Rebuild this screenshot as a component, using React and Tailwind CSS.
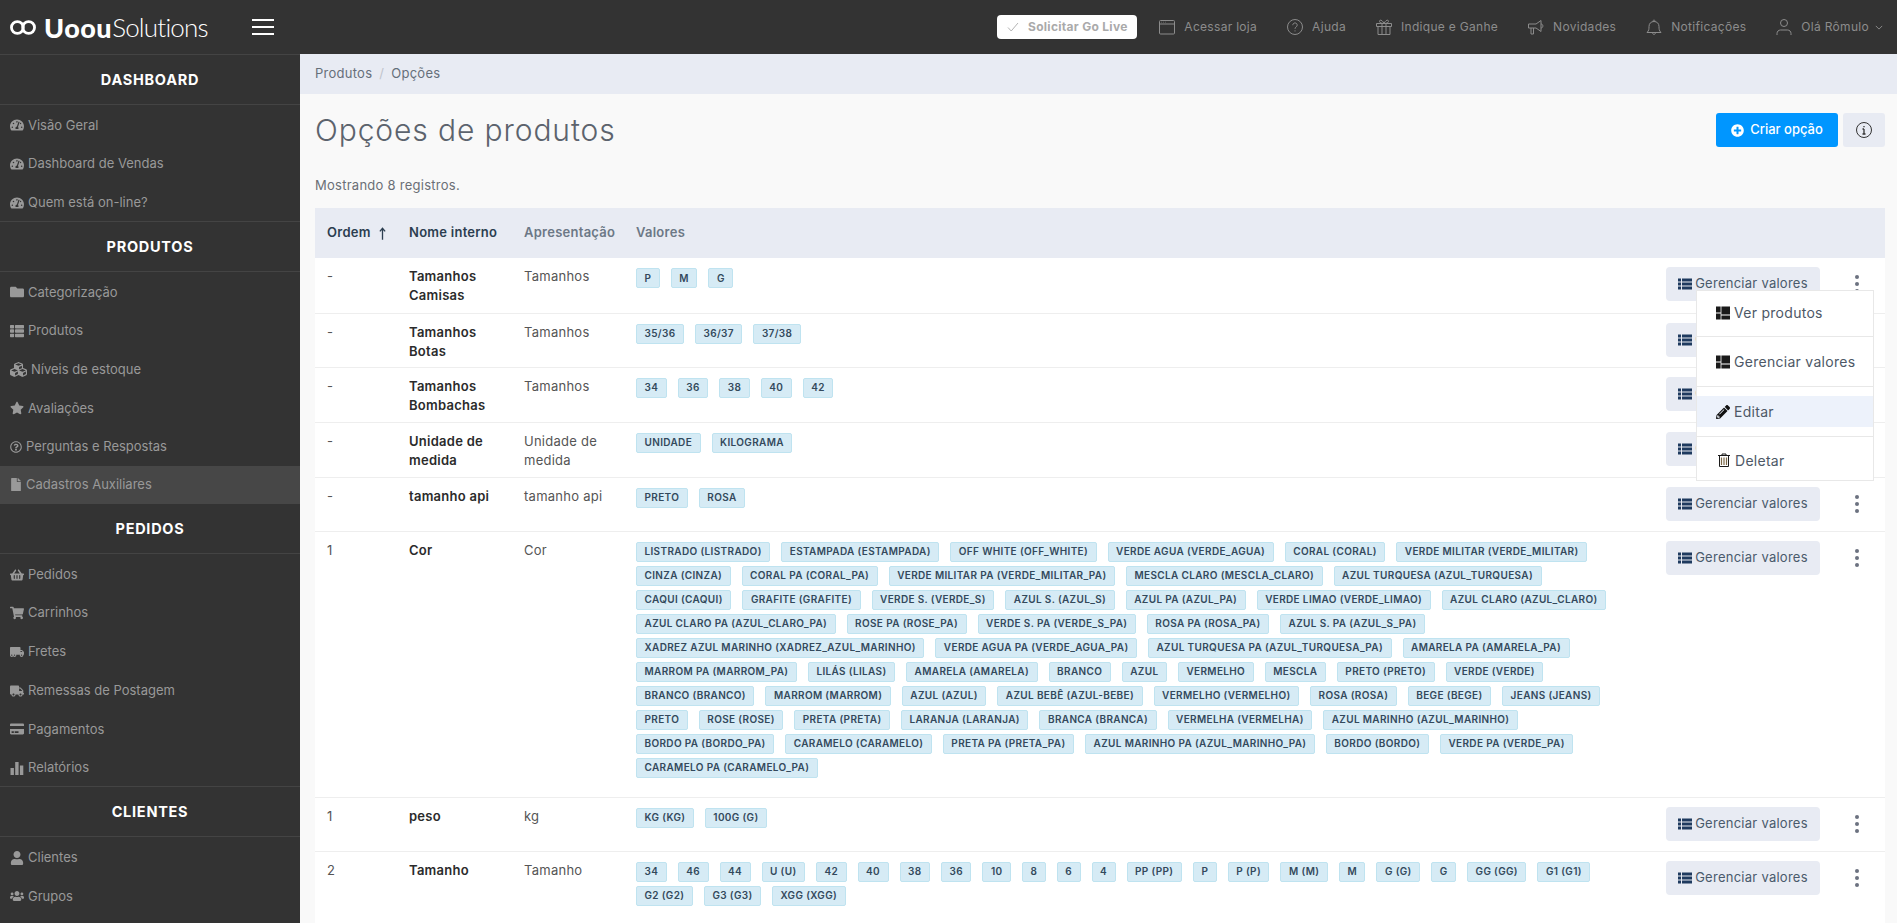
import {
  FaTachometerAlt,
  FaFolder,
  FaThList,
  FaCubes,
  FaStar,
  FaRegQuestionCircle,
  FaFile,
  FaShoppingBasket,
  FaShoppingCart,
  FaTruckMoving,
  FaTruck,
  FaCreditCard,
  FaUser,
  FaUsers,
  FaPlusCircle,
  FaPencilAlt,
} from "react-icons/fa";

const sidebar = [
  {
    title: "DASHBOARD",
    items: [
      { label: "Visão Geral", icon: FaTachometerAlt },
      { label: "Dashboard de Vendas", icon: FaTachometerAlt },
      { label: "Quem está on-line?", icon: FaTachometerAlt },
    ],
  },
  {
    title: "PRODUTOS",
    items: [
      { label: "Categorização", icon: FaFolder },
      { label: "Produtos", icon: FaThList },
      { label: "Níveis de estoque", icon: FaCubes, iconSize: "h-[17px] w-[17px]" },
      { label: "Avaliações", icon: FaStar },
      { label: "Perguntas e Respostas", icon: FaRegQuestionCircle, iconSize: "h-[12px] w-[12px]" },
      { label: "Cadastros Auxiliares", icon: FaFile, active: true, iconSize: "h-[13px] w-[12px]" },
    ],
  },
  {
    title: "PEDIDOS",
    noTopBorder: true,
    items: [
      { label: "Pedidos", icon: FaShoppingBasket },
      { label: "Carrinhos", icon: FaShoppingCart },
      { label: "Fretes", icon: FaTruckMoving },
      { label: "Remessas de Postagem", icon: FaTruck },
      { label: "Pagamentos", icon: FaCreditCard },
      { label: "Relatórios", icon: StatsIcon },
    ],
  },
  {
    title: "CLIENTES",
    items: [
      { label: "Clientes", icon: FaUser },
      { label: "Grupos", icon: FaUsers },
    ],
  },
];

const rows = [
  {
    ordem: "-",
    nome: "Tamanhos Camisas",
    apresentacao: "Tamanhos",
    height: "h-[55px]",
    lines: [["P", "M", "G"]],
  },
  {
    ordem: "-",
    nome: "Tamanhos Botas",
    apresentacao: "Tamanhos",
    height: "h-[54px]",
    lines: [["35/36", "36/37", "37/38"]],
  },
  {
    ordem: "-",
    nome: "Tamanhos Bombachas",
    apresentacao: "Tamanhos",
    height: "h-[55px]",
    lines: [["34", "36", "38", "40", "42"]],
  },
  {
    ordem: "-",
    nome: "Unidade de medida",
    apresentacao: "Unidade de medida",
    height: "h-[55px]",
    lines: [["UNIDADE", "KILOGRAMA"]],
  },
  {
    ordem: "-",
    nome: "tamanho api",
    apresentacao: "tamanho api",
    height: "h-[54px]",
    lines: [["PRETO", "ROSA"]],
  },
  {
    ordem: "1",
    nome: "Cor",
    apresentacao: "Cor",
    height: "h-[266px]",
    lines: [
      ["LISTRADO (LISTRADO)", "ESTAMPADA (ESTAMPADA)", "OFF WHITE (OFF_WHITE)", "VERDE AGUA (VERDE_AGUA)", "CORAL (CORAL)", "VERDE MILITAR (VERDE_MILITAR)"],
      ["CINZA (CINZA)", "CORAL PA (CORAL_PA)", "VERDE MILITAR PA (VERDE_MILITAR_PA)", "MESCLA CLARO (MESCLA_CLARO)", "AZUL TURQUESA (AZUL_TURQUESA)"],
      ["CAQUI (CAQUI)", "GRAFITE (GRAFITE)", "VERDE S. (VERDE_S)", "AZUL S. (AZUL_S)", "AZUL PA (AZUL_PA)", "VERDE LIMAO (VERDE_LIMAO)", "AZUL CLARO (AZUL_CLARO)"],
      ["AZUL CLARO PA (AZUL_CLARO_PA)", "ROSE PA (ROSE_PA)", "VERDE S. PA (VERDE_S_PA)", "ROSA PA (ROSA_PA)", "AZUL S. PA (AZUL_S_PA)"],
      ["XADREZ AZUL MARINHO (XADREZ_AZUL_MARINHO)", "VERDE AGUA PA (VERDE_AGUA_PA)", "AZUL TURQUESA PA (AZUL_TURQUESA_PA)", "AMARELA PA (AMARELA_PA)"],
      ["MARROM PA (MARROM_PA)", "LILÁS (LILAS)", "AMARELA (AMARELA)", "BRANCO", "AZUL", "VERMELHO", "MESCLA", "PRETO (PRETO)", "VERDE (VERDE)"],
      ["BRANCO (BRANCO)", "MARROM (MARROM)", "AZUL (AZUL)", "AZUL BEBÊ (AZUL-BEBE)", "VERMELHO (VERMELHO)", "ROSA (ROSA)", "BEGE (BEGE)", "JEANS (JEANS)"],
      ["PRETO", "ROSE (ROSE)", "PRETA (PRETA)", "LARANJA (LARANJA)", "BRANCA (BRANCA)", "VERMELHA (VERMELHA)", "AZUL MARINHO (AZUL_MARINHO)"],
      ["BORDO PA (BORDO_PA)", "CARAMELO (CARAMELO)", "PRETA PA (PRETA_PA)", "AZUL MARINHO PA (AZUL_MARINHO_PA)", "BORDO (BORDO)", "VERDE PA (VERDE_PA)"],
      ["CARAMELO PA (CARAMELO_PA)"],
    ],
  },
  {
    ordem: "1",
    nome: "peso",
    apresentacao: "kg",
    height: "h-[54px]",
    lines: [["KG (KG)", "100G (G)"]],
  },
  {
    ordem: "2",
    nome: "Tamanho",
    apresentacao: "Tamanho",
    height: "h-[80px]",
    lines: [
      ["34", "46", "44", "U (U)", "42", "40", "38", "36", "10", "8", "6", "4", "PP (PP)", "P", "P (P)", "M (M)", "M", "G (G)", "G", "GG (GG)", "G1 (G1)"],
      ["G2 (G2)", "G3 (G3)", "XGG (XGG)"],
    ],
  },
];

function StatsIcon({ className }) {
  return (
    <svg viewBox="0 0 14 14" className={className} fill="currentColor">
      <rect x="0.5" y="7" width="3.4" height="7" />
      <rect x="5.2" y="1" width="3.4" height="13" />
      <rect x="9.9" y="4.5" width="3.4" height="9.5" />
    </svg>
  );
}

function ListIcon() {
  return (
    <svg viewBox="0 0 14 12" className="h-[12px] w-[14px] shrink-0" fill="#1e3a5f">
      <rect x="0" y="0.5" width="3" height="3" />
      <rect x="4" y="0.5" width="10" height="3" />
      <rect x="0" y="4.5" width="3" height="3" />
      <rect x="4" y="4.5" width="10" height="3" />
      <rect x="0" y="8.5" width="3" height="3" />
      <rect x="4" y="8.5" width="10" height="3" />
    </svg>
  );
}

function TopIcon({ children }) {
  return (
    <svg viewBox="0 0 16 16" className="h-4 w-4 shrink-0" fill="none" stroke="#8c8c8c" strokeWidth="1">
      {children}
    </svg>
  );
}

function SplitIcon() {
  return (
    <svg viewBox="0 0 14 14" className="h-[14px] w-[14px] shrink-0" fill="#1a1a1a">
      <rect x="0" y="0.5" width="4.6" height="6" />
      <rect x="0" y="7.5" width="4.6" height="6" />
      <rect x="5.4" y="0.5" width="8.6" height="8" />
      <rect x="5.4" y="9.5" width="8.6" height="4" />
    </svg>
  );
}

function TrashIcon() {
  return (
    <svg viewBox="0 0 14 14" className="h-[14px] w-[14px] shrink-0" fill="none" stroke="#1a1a1a" strokeWidth="1">
      <path d="M1 2.5h12M5 2.5V1h4v1.5M2.5 2.5v11h9v-11" />
      <path d="M4.5 4.5v7.5M7 4.5v7.5M9.5 4.5v7.5" strokeWidth="1.2" stroke="#7d6a4a" />
    </svg>
  );
}

function Sidebar() {
  return (
    <aside className="w-[300px] shrink-0 bg-[#333333] text-[13px] text-[#999999]">
      {sidebar.map((section) => (
        <div key={section.title}>
          <div
            className={`flex items-center justify-center border-b border-[#444444] text-[14.5px] font-bold tracking-[0.05em] text-white ${
              section.noTopBorder ? "h-[50px]" : "h-[51px] border-t"
            }`}
          >
            {section.title}
          </div>
          {section.items.map((item) => (
            <a
              key={item.label}
              className={`flex h-[38.7px] items-center gap-[4px] pl-[10px] ${item.active ? "bg-[#474747]" : "pt-[2px]"}`}
            >
              <item.icon className={`shrink-0 ${item.iconSize || "h-[14px] w-[14px]"}`} />
              <span>{item.label}</span>
            </a>
          ))}
        </div>
      ))}
    </aside>
  );
}

function Topbar() {
  return (
    <header className="flex h-[54px] shrink-0 items-center bg-[#333333] pr-[14px] text-[12px] tracking-[0.025em] text-[#8c8c8c]">
      <div className="flex w-[252px] items-center pl-[8px] tracking-normal text-white">
        <svg viewBox="0 0 32 16" className="mr-[6px] h-[15px] w-[30px]" fill="none" stroke="white" strokeWidth="3">
          <circle cx="10" cy="8" r="6.3" />
          <circle cx="22" cy="8" r="6.3" />
        </svg>
        <span className="font-['Lato',sans-serif] text-[27px] leading-none font-black tracking-[0.5px]">Uoou</span>
        <span className="font-['Lato',sans-serif] text-[26px] leading-none font-light tracking-[-0.8px]">Solutions</span>
      </div>
      <div className="flex w-[22px] flex-col gap-[5px]">
        <span className="h-[2px] bg-white" />
        <span className="h-[2px] bg-white" />
        <span className="h-[2px] bg-white" />
      </div>

      <div className="ml-auto flex items-center gap-[30px]">
        <button className="mr-[-8px] flex h-[24px] w-[140px] items-center justify-center gap-[9px] rounded bg-white font-bold text-[#aaaaaa]">
          <svg viewBox="0 0 12 12" className="h-3 w-3" fill="none" stroke="#aaaaaa" strokeWidth="0.9">
            <path d="M1 6.5l3.2 3.5L11 2" />
          </svg>
          Solicitar Go Live
        </button>
        <a className="flex items-center gap-[9px]">
          <TopIcon>
            <rect x="0.5" y="1.5" width="15" height="13.5" rx="1" />
            <path d="M0.5 5h15M2.5 3.2h.5M4.5 3.2h.5M6.5 3.2h.5" />
          </TopIcon>
          Acessar loja
        </a>
        <a className="flex items-center gap-[9px]">
          <TopIcon>
            <circle cx="8" cy="8" r="7.5" />
            <path d="M5.8 6.2c0-3 4.4-3 4.4 0 0 1.7-2.2 1.7-2.2 3.6M8 11.4v1" />
          </TopIcon>
          Ajuda
        </a>
        <a className="flex items-center gap-[9px]">
          <TopIcon>
            <path d="M0.5 4.5h15v3h-15zM2 7.5v8h12v-8M6 4.5v11M10 4.5v11" />
            <path d="M8 4.5C6.5 1 3.5 0 3.5 2.5 3.5 4 6 4.5 8 4.5 10 4.5 12.5 4 12.5 2.5 12.5 0 9.5 1 8 4.5z" />
          </TopIcon>
          Indique e Ganhe
        </a>
        <a className="flex items-center gap-[9px]">
          <TopIcon>
            <path d="M0.5 5h7.5l5-3.5v11L8 9H0.5zM3 9v6h2.5V9M13 5c2.5 0 2.5 4 0 4" />
          </TopIcon>
          Novidades
        </a>
        <a className="flex items-center gap-[9px]">
          <TopIcon>
            <path d="M1 13.5c2-2 2-3.5 2-6 0-3 2-5 5-5s5 2 5 5c0 2.5 0 4 2 6zM6.5 13.5c0 2.5 3 2.5 3 0M7 2.5c0-2 2-2 2 0" />
          </TopIcon>
          Notificações
        </a>
        <a className="flex items-center gap-[9px]">
          <TopIcon>
            <circle cx="8" cy="4" r="3.5" />
            <path d="M1 16v-1.5c0-2 1.5-3.5 3.5-3.5h7c2 0 3.5 1.5 3.5 3.5V16" />
          </TopIcon>
          <span>Olá Rômulo</span>
          <svg viewBox="0 0 10 6" className="ml-[-3px] h-[5px] w-[8px]" fill="none" stroke="#8c8c8c" strokeWidth="1.2">
            <path d="M1 1l4 4 4-4" />
          </svg>
        </a>
      </div>
    </header>
  );
}

function Tag({ children }) {
  return (
    <span className="flex h-[20px] items-center whitespace-nowrap rounded-[2px] border border-[#bfe3f0] bg-[#d6ebf5] px-[7.5px] text-[10px] font-semibold tracking-[0.035em] text-[#33495c]">
      {children}
    </span>
  );
}

function ActionMenu() {
  return (
    <div className="absolute top-[82px] right-[11px] w-[178px] border border-[#e8e8e8] bg-white text-[14px] tracking-[0.02em] text-[#4d5866]">
      <div className="flex h-[46px] items-center gap-[4px] border-b border-[#e8e8e8] pb-[2px] pl-[19px]">
        <SplitIcon />
        Ver produtos
      </div>
      <div className="flex h-[50px] items-center gap-[4px] border-b border-[#e8e8e8] pl-[19px]">
        <SplitIcon />
        Gerenciar valores
      </div>
      <div className="h-[50px] border-b border-[#e8e8e8] pt-[9px]">
        <div className="flex h-[31px] items-center gap-[4px] bg-[#edf2fb] pl-[19px]">
          <FaPencilAlt className="h-[14px] w-[14px] text-[#111111]" />
          Editar
        </div>
      </div>
      <div className="flex h-[43px] items-center gap-[4px] pt-[3px] pl-[20px]">
        <TrashIcon />
        Deletar
      </div>
    </div>
  );
}

function OptionsTable() {
  return (
    <div className="relative mt-[13px]">
      <table className="w-full table-fixed border-collapse text-[13px] tracking-[0.02em]">
        <thead>
          <tr className="h-[50px] bg-[#e8ebf3] text-left font-semibold">
            <th className="w-[82px] pl-[12px] font-semibold text-[#2c3e50]">
              <span className="flex items-center gap-[8px]">
                Ordem
                <svg viewBox="0 0 8 14" className="h-[13px] w-[7px]" fill="none" stroke="#2c3e50" strokeWidth="1.5">
                  <path d="M4 14V1M1 4.5L4 1l3 3.5" />
                </svg>
              </span>
            </th>
            <th className="w-[115px] pl-[12px] font-semibold text-[#2c3e50]">Nome interno</th>
            <th className="w-[112px] pl-[12px] font-semibold text-[#6c7886]">Apresentação</th>
            <th className="pl-[12px] font-semibold text-[#6c7886]">Valores</th>
            <th className="w-[166px]" />
            <th className="w-[65px]" />
          </tr>
        </thead>
        <tbody className="bg-white text-[#555555]">
          {rows.map((row) => (
            <tr key={row.nome} className={`${row.height} border-b border-[#eeeeee] align-top`}>
              <td className="pt-[9px] pl-[12px] leading-[19px]">{row.ordem}</td>
              <td className="pt-[9px] pl-[12px] pr-[10px] leading-[19px] font-semibold text-[#2b2b2b]">{row.nome}</td>
              <td className="pt-[9px] pl-[12px] pr-[10px] leading-[19px]">{row.apresentacao}</td>
              <td className="pt-[10px] pl-[12px]">
                <div className="flex flex-col gap-[4px]">
                  {row.lines.map((line) => (
                    <div key={line.join()} className="flex gap-[11px]">
                      {line.map((value) => (
                        <Tag key={value}>{value}</Tag>
                      ))}
                    </div>
                  ))}
                </div>
              </td>
              <td className="pt-[9px] pl-[12px]">
                <button className="flex h-[34px] w-[154px] items-center justify-center gap-[3px] rounded bg-[#e8ebf3] text-[13px] tracking-[0.02em] text-[#4a5a6c]">
                  <ListIcon />
                  Gerenciar valores
                </button>
              </td>
              <td className="pt-[9px]">
                <div className="flex h-[34px] flex-col items-center justify-center gap-[3px] pl-[9px]">
                  <span className="h-[4px] w-[4px] rounded-full bg-[#6c7280]" />
                  <span className="h-[4px] w-[4px] rounded-full bg-[#6c7280]" />
                  <span className="h-[4px] w-[4px] rounded-full bg-[#6c7280]" />
                </div>
              </td>
            </tr>
          ))}
        </tbody>
      </table>
      <ActionMenu />
    </div>
  );
}

export default function App() {
  return (
    <div className="flex h-screen flex-col overflow-hidden bg-[#f9f9f9] font-['Inter',sans-serif]">
      <Topbar />
      <div className="flex min-h-0 flex-1">
        <Sidebar />
        <main className="min-w-0 flex-1">
          <nav className="flex h-[40px] items-center gap-[7px] bg-[#e8ebf3] pl-[15px] text-[13px] tracking-[0.02em] text-[#666f7a]">
            <span>Produtos</span>
            <span className="text-[#c0c4cc]">/</span>
            <span>Opções</span>
          </nav>
          <div className="px-[12px] pl-[15px]">
            <div className="flex h-[72px] items-center justify-between">
              <h1 className="text-[30px] font-light tracking-[0.03em] text-[#5c636d]">Opções de produtos</h1>
              <div className="flex gap-[5px]">
                <button className="flex h-[34px] w-[122px] items-center justify-center gap-[6px] rounded-[3px] bg-[#0096ff] text-[13px] font-medium text-white">
                  <FaPlusCircle className="h-[13px] w-[13px]" />
                  Criar opção
                </button>
                <button className="flex h-[34px] w-[42px] items-center justify-center rounded-[3px] bg-[#e8ebf3]">
                  <svg viewBox="0 0 16 16" className="h-4 w-4" fill="none" stroke="#333333" strokeWidth="1">
                    <circle cx="8" cy="8" r="7.5" />
                    <path d="M8 7v5M6.5 7H8M6.5 12h3M8 4v1.3" strokeWidth="1.3" />
                  </svg>
                </button>
              </div>
            </div>
            <p className="mt-[10px] text-[13px] leading-[19px] tracking-[0.02em] text-[#6b6f76]">Mostrando 8 registros.</p>
            <OptionsTable />
          </div>
        </main>
      </div>
    </div>
  );
}
